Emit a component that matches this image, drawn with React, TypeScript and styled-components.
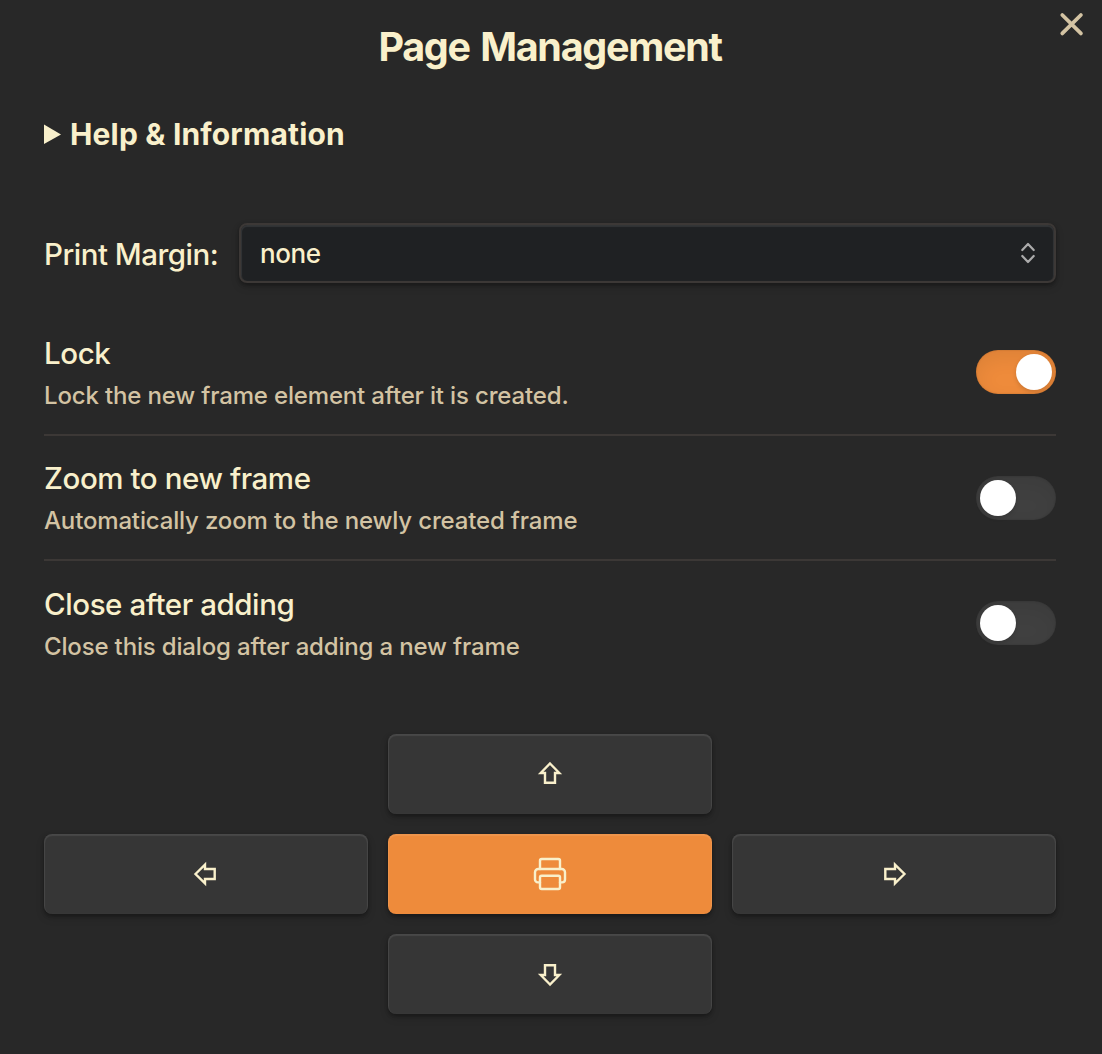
import React, { useState } from "react";
import styled, { createGlobalStyle } from "styled-components";

const GlobalStyle = createGlobalStyle`
  *, *::before, *::after { box-sizing: border-box; }
  body {
    margin: 0;
    background: #282828;
    color: #f9f0cb;
    font-family: Inter, "Liberation Sans", sans-serif;
    font-weight: 450;
  }
`;

const Modal = styled.main`
  position: relative;
  height: 1054px;
  padding: 21px 46px 0 44px;
  background: #282828;
`;

const CloseButton = styled.button`
  position: absolute;
  top: 8px;
  right: 15px;
  display: flex;
  width: 32px;
  height: 32px;
  padding: 0;
  border: 0;
  background: none;
  color: #d3c3a3;
`;

const Title = styled.h1`
  margin: 0;
  text-align: center;
  font-size: 39.5px;
  font-weight: 650;
  line-height: 52px;
  letter-spacing: -1.3px;
  word-spacing: 2.5px;
`;

const Help = styled.button`
  display: flex;
  align-items: center;
  gap: 9px;
  height: 40px;
  margin-top: 41px;
  padding: 0;
  border: 0;
  background: none;
  color: inherit;
  font: 700 30px/40px Inter, "Liberation Sans", sans-serif;
  letter-spacing: 0.17px;
`;

const MarginRow = styled.div`
  display: flex;
  align-items: center;
  height: 60px;
  margin-top: 69px;
`;

const Label = styled.span`
  width: 195px;
  flex: none;
  padding-top: 2px;
  font-size: 29.5px;
  line-height: 40px;
  letter-spacing: -0.5px;
`;

const Dropdown = styled.button`
  display: flex;
  flex: 1;
  align-items: center;
  justify-content: space-between;
  height: 60px;
  padding: 0 18px 0 19px;
  border: 2px solid #3c3836;
  border-radius: 8px;
  background: #1f2123;
  color: inherit;
  font: 450 26px/36px Inter, "Liberation Sans", sans-serif;
  letter-spacing: -0.4px;
  box-shadow:
    inset 0 1px 1px 1px rgba(255, 255, 255, 0.09),
    0 4px 8px rgba(0, 0, 0, 0.15),
    0 2px 3px rgba(0, 0, 0, 0.1),
    0 2px 4px rgba(0, 0, 0, 0.2);
`;

const DropdownValue = styled.span`
  padding-top: 1px;
`;

const Settings = styled.div`
  margin-top: 26.9px;
`;

const SettingRow = styled.div<{ $divided?: boolean }>`
  display: flex;
  align-items: center;
  justify-content: space-between;
  height: ${(p) => (p.$divided ? 125.5 : 124)}px;
  border-top: ${(p) => (p.$divided ? "2px solid #3c3836" : "0")};
`;

const SettingInfo = styled.div`
  padding-top: 2.6px;
`;

const SettingName = styled.div`
  font-size: 29.5px;
  line-height: 40px;
  letter-spacing: -0.42px;
`;

const SettingText = styled.div`
  margin-top: 5px;
  color: #d3c3a3;
  font-size: 24px;
  line-height: 36px;
  letter-spacing: -0.16px;
`;

const Track = styled.button<{ $on: boolean }>`
  display: flex;
  flex: none;
  justify-content: ${(p) => (p.$on ? "flex-end" : "flex-start")};
  width: 80px;
  height: 44px;
  padding: 4px;
  border: 0;
  border-radius: 22px;
  background: ${(p) => (p.$on ? "#ee8b3b" : "#404040")};
  box-shadow: inset 0 8px 20px rgba(0, 0, 0, 0.07), inset 0 0 2px rgba(0, 0, 0, 0.21);
`;

const Knob = styled.span`
  width: 36px;
  height: 36px;
  border-radius: 50%;
  background: #fff;
  box-shadow: 0 2px 4px rgba(0, 0, 0, 0.15);
`;

const Pad = styled.div`
  display: grid;
  grid-template-columns: repeat(3, 1fr);
  grid-template-areas: ". up ." "left print right" ". down .";
  grid-auto-rows: 80px;
  gap: 20px;
  margin-top: 49.1px;
`;

const PadButton = styled.button<{ $area: string; $primary?: boolean }>`
  grid-area: ${(p) => p.$area};
  display: flex;
  align-items: center;
  justify-content: center;
  height: 80px;
  padding: 0;
  border: 0;
  border-radius: 8px;
  background: ${(p) => (p.$primary ? "#ee8b3b" : "#363636")};
  color: #f9f0cb;
  box-shadow:
    inset 0 1px 1px 1px rgba(255, 255, 255, 0.09),
    0 4px 8px rgba(0, 0, 0, 0.15),
    0 2px 3px rgba(0, 0, 0, 0.1),
    0 2px 4px rgba(0, 0, 0, 0.2);
`;

const Arrow = ({ angle }: { angle: number }) => (
  <svg width="32" height="32" viewBox="0 0 32 32" fill="none" stroke="currentColor" strokeWidth="2.4">
    <path transform={`rotate(${angle} 16 16)`} d="M16 5.5l9.3 9.5H21v9.7H11V15H6.7z" />
  </svg>
);

const PrinterIcon = () => (
  <svg width="40" height="40" viewBox="0 0 24 24" fill="none" stroke="currentColor" strokeWidth="1.45" strokeLinecap="round" strokeLinejoin="round">
    <path d="M18 17h1.3a1.7 1.7 0 0 0 1.7-1.7v-4.3a2 2 0 0 0-2-2H5a2 2 0 0 0-2 2v4.3A1.7 1.7 0 0 0 4.7 17H6" />
    <path d="M18 9V4a1 1 0 0 0-1-1H7a1 1 0 0 0-1 1v5" />
    <path d="M6 14a1 1 0 0 1 1-1h10a1 1 0 0 1 1 1v6a1 1 0 0 1-1 1H7a1 1 0 0 1-1-1z" />
  </svg>
);

type SettingProps = { name: string; text: string; initial: boolean; divided?: boolean };

function Setting({ name, text, initial, divided }: SettingProps) {
  const [on, setOn] = useState(initial);
  return (
    <SettingRow $divided={divided}>
      <SettingInfo>
        <SettingName>{name}</SettingName>
        <SettingText>{text}</SettingText>
      </SettingInfo>
      <Track $on={on} onClick={() => setOn(!on)}>
        <Knob />
      </Track>
    </SettingRow>
  );
}

export default function App() {
  return (
    <>
      <GlobalStyle />
      <Modal>
        <CloseButton>
          <svg width="32" height="32" viewBox="0 0 32 32" fill="none" stroke="currentColor" strokeWidth="3.8" strokeLinecap="round">
            <path d="M7.3 7l18.6 18.4M25.9 7L7.3 25.4" />
          </svg>
        </CloseButton>
        <Title>Page Management</Title>
        <Help>
          <svg width="17" height="20" viewBox="0 0 17 20" fill="currentColor">
            <path d="M0 0.5l17 10L0 20z" />
          </svg>
          Help &amp; Information
        </Help>
        <MarginRow>
          <Label>Print Margin:</Label>
          <Dropdown>
            <DropdownValue>none</DropdownValue>
            <svg width="16" height="24" viewBox="0 0 16 24" fill="none" stroke="#ababab" strokeWidth="2.2" strokeLinecap="round" strokeLinejoin="round">
              <path d="M2.3 9L8 3l5.7 6M2.3 15L8 21l5.7-6" />
            </svg>
          </Dropdown>
        </MarginRow>
        <Settings>
          <Setting name="Lock" text="Lock the new frame element after it is created." initial />
          <Setting name="Zoom to new frame" text="Automatically zoom to the newly created frame" initial={false} divided />
          <Setting name="Close after adding" text="Close this dialog after adding a new frame" initial={false} divided />
        </Settings>
        <Pad>
          <PadButton $area="up"><Arrow angle={0} /></PadButton>
          <PadButton $area="left"><Arrow angle={-90} /></PadButton>
          <PadButton $area="print" $primary><PrinterIcon /></PadButton>
          <PadButton $area="right"><Arrow angle={90} /></PadButton>
          <PadButton $area="down"><Arrow angle={180} /></PadButton>
        </Pad>
      </Modal>
    </>
  );
}
